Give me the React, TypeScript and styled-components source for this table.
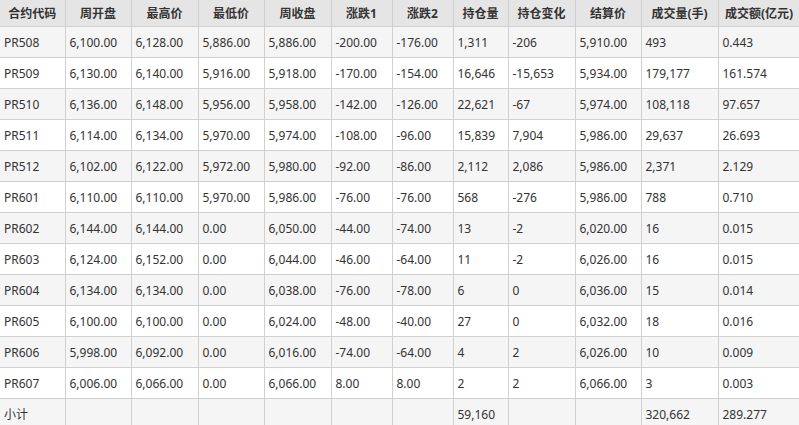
import styled, { createGlobalStyle } from 'styled-components';

const GlobalStyle = createGlobalStyle`
  html, body {
    margin: 0;
    padding: 0;
    background: #ffffff;
    overflow: hidden;
  }
`;

const columns = [
  { title: '合约代码', width: 65 },
  { title: '周开盘', width: 66 },
  { title: '最高价', width: 67 },
  { title: '最低价', width: 66 },
  { title: '周收盘', width: 67 },
  { title: '涨跌1', width: 61 },
  { title: '涨跌2', width: 61 },
  { title: '持仓量', width: 55 },
  { title: '持仓变化', width: 67 },
  { title: '结算价', width: 66 },
  { title: '成交量(手)', width: 77 },
  { title: '成交额(亿元)', width: 82 },
];

const rows: string[][] = [
  ['PR508', '6,100.00', '6,128.00', '5,886.00', '5,886.00', '-200.00', '-176.00', '1,311', '-206', '5,910.00', '493', '0.443'],
  ['PR509', '6,130.00', '6,140.00', '5,916.00', '5,918.00', '-170.00', '-154.00', '16,646', '-15,653', '5,934.00', '179,177', '161.574'],
  ['PR510', '6,136.00', '6,148.00', '5,956.00', '5,958.00', '-142.00', '-126.00', '22,621', '-67', '5,974.00', '108,118', '97.657'],
  ['PR511', '6,114.00', '6,134.00', '5,970.00', '5,974.00', '-108.00', '-96.00', '15,839', '7,904', '5,986.00', '29,637', '26.693'],
  ['PR512', '6,102.00', '6,122.00', '5,972.00', '5,980.00', '-92.00', '-86.00', '2,112', '2,086', '5,986.00', '2,371', '2.129'],
  ['PR601', '6,110.00', '6,110.00', '5,970.00', '5,986.00', '-76.00', '-76.00', '568', '-276', '5,986.00', '788', '0.710'],
  ['PR602', '6,144.00', '6,144.00', '0.00', '6,050.00', '-44.00', '-74.00', '13', '-2', '6,020.00', '16', '0.015'],
  ['PR603', '6,124.00', '6,152.00', '0.00', '6,044.00', '-46.00', '-64.00', '11', '-2', '6,026.00', '16', '0.015'],
  ['PR604', '6,134.00', '6,134.00', '0.00', '6,038.00', '-76.00', '-78.00', '6', '0', '6,036.00', '15', '0.014'],
  ['PR605', '6,100.00', '6,100.00', '0.00', '6,024.00', '-48.00', '-40.00', '27', '0', '6,032.00', '18', '0.016'],
  ['PR606', '5,998.00', '6,092.00', '0.00', '6,016.00', '-74.00', '-64.00', '4', '2', '6,026.00', '10', '0.009'],
  ['PR607', '6,006.00', '6,066.00', '0.00', '6,066.00', '8.00', '8.00', '2', '2', '6,066.00', '3', '0.003'],
  ['小计', '', '', '', '', '', '', '59,160', '', '', '320,662', '289.277'],
];

const Table = styled.table`
  border-collapse: collapse;
  table-layout: fixed;
  width: 800px;
  font-family: 'Noto Sans', 'Noto Sans CJK SC', sans-serif;
  font-size: 12px;
  color: #333333;
`;

const HeadCell = styled.th`
  height: 26px;
  padding: 0;
  background: #e5e5e5;
  border: 1px solid #d0d0d0;
  border-top: none;
  font-weight: bold;
  text-align: center;
  white-space: nowrap;
  &:first-child {
    border-left: none;
  }
`;

const Row = styled.tr<{ $shaded: boolean }>`
  background: ${(p) => (p.$shaded ? '#f5f5f5' : '#ffffff')};
`;

const Cell = styled.td`
  height: 30px;
  padding: 0 0 0 4px;
  border: 1px solid #d0d0d0;
  text-align: left;
  white-space: nowrap;
  overflow: hidden;
  &:first-child {
    border-left: none;
  }
`;

export default function App() {
  return (
    <>
      <GlobalStyle />
      <Table>
        <colgroup>
          {columns.map((c) => (
            <col key={c.title} style={{ width: c.width }} />
          ))}
        </colgroup>
        <thead>
          <tr>
            {columns.map((c) => (
              <HeadCell key={c.title}>{c.title}</HeadCell>
            ))}
          </tr>
        </thead>
        <tbody>
          {rows.map((r, i) => (
            <Row key={r[0]} $shaded={i % 2 === 0}>
              {r.map((v, j) => (
                <Cell key={j}>{v}</Cell>
              ))}
            </Row>
          ))}
        </tbody>
      </Table>
    </>
  );
}
